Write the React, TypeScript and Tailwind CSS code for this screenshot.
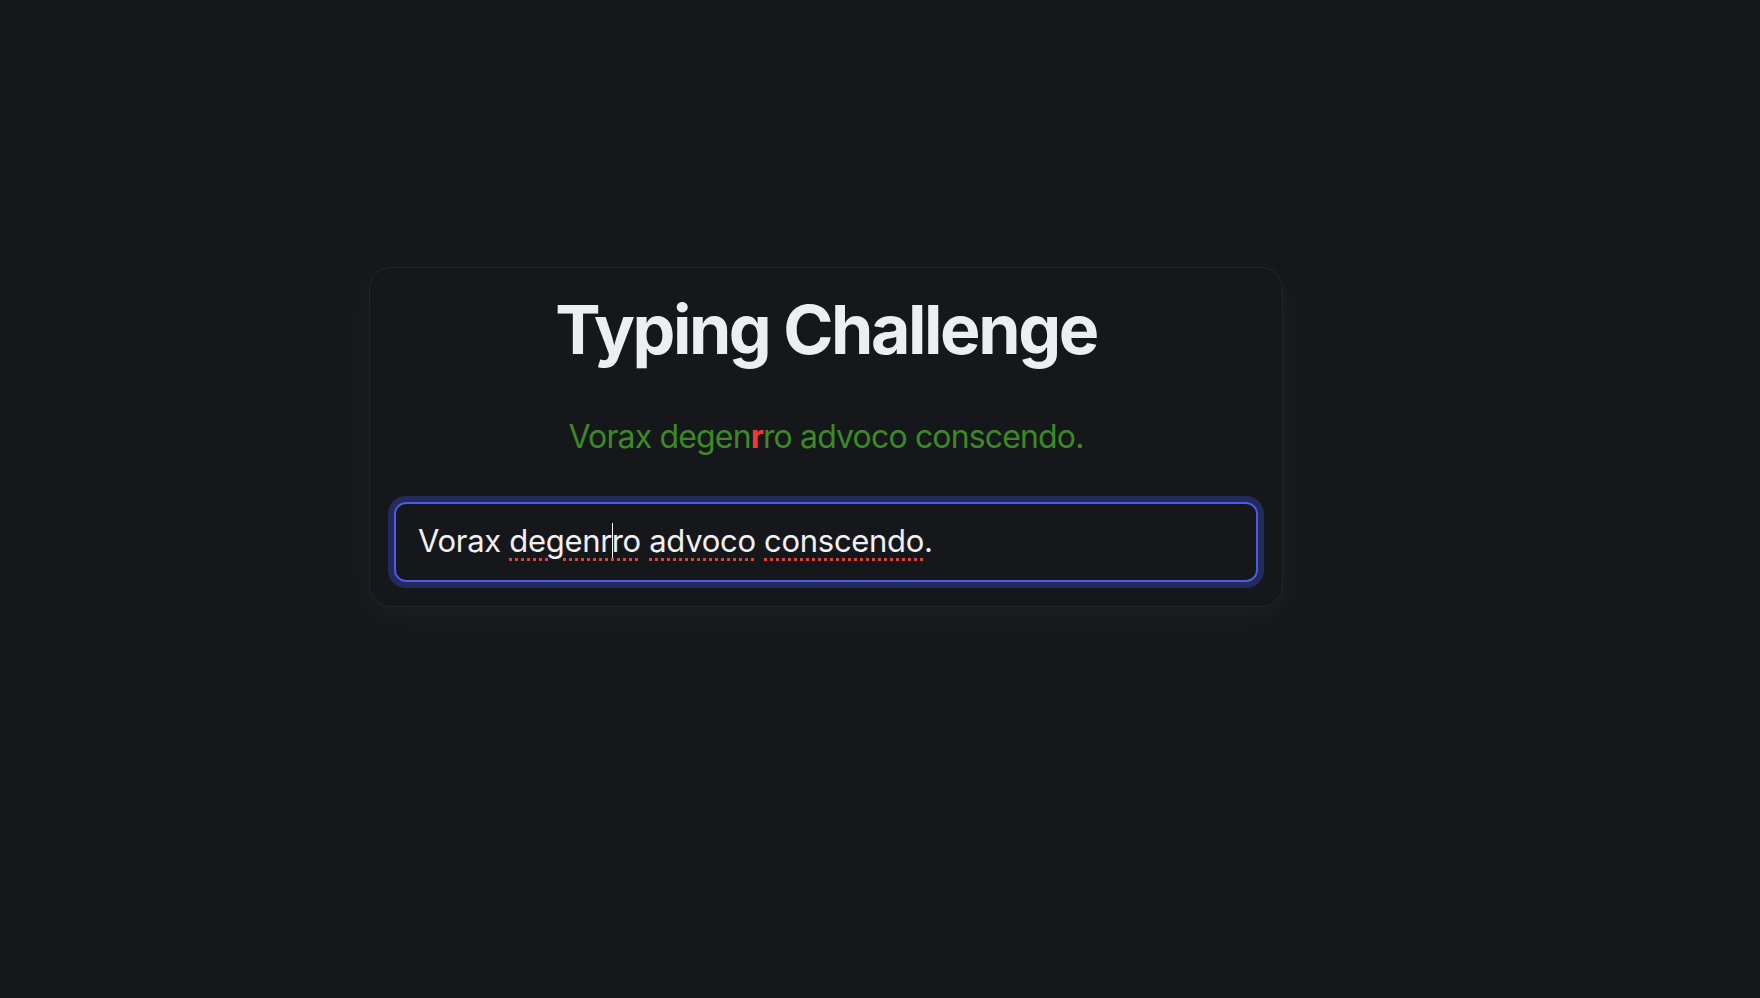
const target = "Vorax degenrro advoco conscendo.";
const wrongIndex = 11;

const typedWords = [
  { text: "Vorax", flagged: false },
  { text: "degenr", flagged: true, caretAfter: true, rest: "ro" },
  { text: "advoco", flagged: true },
  { text: "conscendo", flagged: true },
];

export default function App() {
  return (
    <div
      className="min-h-screen bg-[#16171b] pt-[267px] pl-[369px]"
      style={{ fontFamily: "Inter, 'Noto Sans', sans-serif" }}
    >
      <div className="w-[914px] rounded-[22px] border border-[#25262a] bg-[#16171b] px-6 pt-[21px] pb-6 shadow-[0_8px_36px_rgba(255,255,255,0.045)] flex flex-col items-center">
        <h1 className="text-[68px] font-bold leading-[1.2] tracking-[-2.4px] text-[#eceef2]">
          Typing Challenge
        </h1>

        {/* target sentence */}
        <p className="mt-[42px] text-[32px] leading-[1.5] tracking-[-0.85px] text-[#3b8a26]">
          {target.split("").map((ch, i) => (
            <span
              key={i}
              className={i === wrongIndex ? "font-bold text-[#ef3a2f]" : ""}
            >
              {ch}
            </span>
          ))}
        </p>

        {/* input */}
        <div className="mt-[41px] w-full rounded-[12px] ring-[6px] ring-[#232a5c]">
          <div className="flex h-[80px] items-center rounded-[12px] border-2 border-[#4a5bea] bg-[#16171b] pl-[22px] pr-5 text-[31px] tracking-[-0.3px] text-[#f0f1f4] whitespace-pre">
            {typedWords.map((w, i) => (
              <span key={i}>
                <span
                  className={
                    w.flagged
                      ? "underline decoration-dotted decoration-[#d9453a] decoration-[3px] underline-offset-[6px]"
                      : ""
                  }
                >
                  {w.text}
                  {w.caretAfter && (
                    <span className="inline-block h-[37px] w-px mr-[-1px] bg-white align-[-8px]" />
                  )}
                  {w.rest}
                </span>
                {i < typedWords.length - 1 ? " " : "."}
              </span>
            ))}
          </div>
        </div>
      </div>
    </div>
  );
}
